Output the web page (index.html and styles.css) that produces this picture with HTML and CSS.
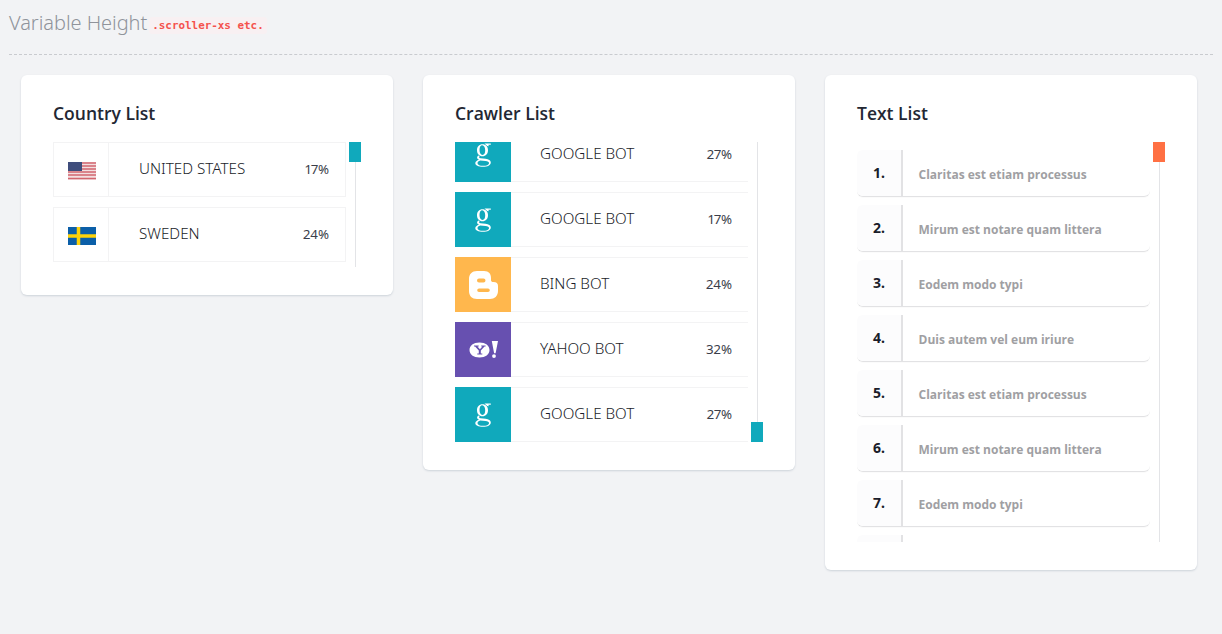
FILE: index.html
```html
<!DOCTYPE html>
<html lang="en">
<head>
  <meta charset="UTF-8" />
  <meta name="viewport" content="width=device-width, initial-scale=1.0" />
  <title>Variable Height Scrollers</title>
  <link rel="stylesheet" href="styles.css">
</head>
<body>
  <svg class="defs" width="0" height="0" aria-hidden="true">
    <symbol id="icon-google" viewBox="0 0 16 24">
      <path fill="currentColor" fill-rule="evenodd" d="M7.500 1.200c3.300 0 5.500 2.500 5.500 6s-2.200 6-5.500 6-5.500-2.500-5.500-6 2.200-6 5.500-6zm-.3 1.100c-1.700 0-2.700 1.900-2.700 4.700s1.200 5 3 5c1.700 0 2.700-1.900 2.700-4.700s-1.200-5-3-5z"/>
      <path fill="currentColor" d="M9.500.6h6.300v1.200h-2.400l.4 1.500-1.600-.4-1.400-1.100z"/>
      <path fill="currentColor" fill-rule="evenodd" d="M3.400 12.400l1.300.7c-1 1.300-.7 2 .8 2.200l5 .5c3.300.4 5.300 1.500 5.300 3.600 0 2.700-3.300 4.400-7.900 4.400C3.400 23.800.3 22.500.3 20.300c0-1.700 1.500-2.800 3.700-3.500-1.300-.5-1.900-1.200-1.900-2.200 0-.9.500-1.600 1.300-2.200zm1.800 5.200c-1.600.4-2.700 1.300-2.700 2.600 0 1.600 2.400 2.600 5.500 2.600 3.400 0 6-1 6-2.900 0-1.200-1.200-1.800-3.500-2z"/>
    </symbol>
    <symbol id="icon-blogger" viewBox="0 0 29 28">
      <path fill="currentColor" fill-rule="evenodd" d="M8 0h7c5 0 7 3 7 7v2c0 1.500.8 2 2.500 2 3 0 4.500 1.500 4.500 4v5c0 5-3.500 8-8 8H8c-5 0-8-3-8-8V8c0-5 3-8 8-8zm2 7.500a2 2 0 0 0 0 4h4.500a2 2 0 0 0 0-4zm0 10a1.800 1.800 0 0 0 0 3.600h9a1.800 1.800 0 0 0 0-3.600z"/>
    </symbol>
    <symbol id="icon-yahoo" viewBox="0 0 29 17">
      <path fill="currentColor" fill-rule="evenodd" d="M10.500 1.500c6 0 10 3 10 7.500s-4 7.500-10 7.500S.5 13.500.5 9s4-7.500 10-7.500zM5 4.500v1h1.100l3.700 4v3H8.300v1h5v-1h-1.500v-3l3.700-4h1.100v-1h-4.400v1h1.200l-2.500 2.700-2.400-2.700h1.200v-1z"/>
      <path fill="currentColor" d="M22.800 0H29l-2.400 12.200h-1.500zM25 13.200a1.900 1.900 0 1 1 0 3.800 1.900 1.900 0 0 1 0-3.800z"/>
    </symbol>
  </svg>

  <h2 class="page-title">Variable Height<code>.scroller-xs etc.</code></h2>
  <hr class="divider">

  <div class="cards">
    <section class="card">
      <h3 class="card-title">Country List</h3>
      <div class="scroller scroller-xs">
        <div class="rail"></div>
        <div class="thumb thumb-top"></div>
        <div class="scroll-body">
          <div class="country-row">
            <div class="flag-cell">
              <svg class="flag" viewBox="0 0 28 18">
                <rect width="28" height="18" fill="#f3dfe0"/>
                <path d="M0 1h28M0 4h28M0 7h28M0 10h28M0 13h28M0 16.500h28" stroke="#d2666f" stroke-width="1.500"/>
                <rect width="14" height="9" fill="#3f4d7c"/>
              </svg>
            </div>
            <div class="country-name">UNITED STATES</div>
            <div class="pct">17%</div>
          </div>
          <div class="country-row">
            <div class="flag-cell">
              <svg class="flag" viewBox="0 0 28 18">
                <rect width="28" height="18" fill="#0b5fa8"/>
                <path d="M0 9h28M10.500 0v18" stroke="#fdd20a" stroke-width="3.500"/>
              </svg>
            </div>
            <div class="country-name">SWEDEN</div>
            <div class="pct">24%</div>
          </div>
        </div>
      </div>
    </section>

    <section class="card">
      <h3 class="card-title">Crawler List</h3>
      <div class="scroller scroller-sm">
        <div class="rail"></div>
        <div class="thumb thumb-bottom"></div>
        <div class="scroll-body crawler-body">
          <div class="crawler-row">
            <div class="bot-icon bg-teal"><svg class="i-google"><use href="#icon-google"/></svg></div>
            <div class="bot-name">GOOGLE BOT</div>
            <div class="pct">27%</div>
          </div>
          <div class="crawler-row">
            <div class="bot-icon bg-teal"><svg class="i-google"><use href="#icon-google"/></svg></div>
            <div class="bot-name">GOOGLE BOT</div>
            <div class="pct">17%</div>
          </div>
          <div class="crawler-row">
            <div class="bot-icon bg-amber"><svg class="i-blogger"><use href="#icon-blogger"/></svg></div>
            <div class="bot-name">BING BOT</div>
            <div class="pct">24%</div>
          </div>
          <div class="crawler-row">
            <div class="bot-icon bg-purple"><svg class="i-yahoo"><use href="#icon-yahoo"/></svg></div>
            <div class="bot-name">YAHOO BOT</div>
            <div class="pct">32%</div>
          </div>
          <div class="crawler-row">
            <div class="bot-icon bg-teal"><svg class="i-google"><use href="#icon-google"/></svg></div>
            <div class="bot-name">GOOGLE BOT</div>
            <div class="pct">27%</div>
          </div>
        </div>
      </div>
    </section>

    <section class="card">
      <h3 class="card-title">Text List</h3>
      <div class="scroller scroller-md">
        <div class="rail"></div>
        <div class="thumb thumb-top thumb-orange"></div>
        <div class="scroll-body text-body">
          <div class="text-row"><div class="num">1.</div><div class="text">Claritas est etiam processus</div></div>
          <div class="text-row"><div class="num">2.</div><div class="text">Mirum est notare quam littera</div></div>
          <div class="text-row"><div class="num">3.</div><div class="text">Eodem modo typi</div></div>
          <div class="text-row"><div class="num">4.</div><div class="text">Duis autem vel eum iriure</div></div>
          <div class="text-row"><div class="num">5.</div><div class="text">Claritas est etiam processus</div></div>
          <div class="text-row"><div class="num">6.</div><div class="text">Mirum est notare quam littera</div></div>
          <div class="text-row"><div class="num">7.</div><div class="text">Eodem modo typi</div></div>
          <div class="text-row"><div class="num"></div><div class="text"></div></div>
        </div>
      </div>
    </section>
  </div>
</body>
</html>
```

FILE: styles.css
```css
* {
  box-sizing: border-box;
}
html, body {
  height: 100%;
}
body {
  margin: 0;
  padding: 0 9px;
  background: #f2f3f5;
  font-family: "Noto Sans", "Open Sans", sans-serif;
  color: #1a1d2a;
  overflow: hidden;
}
.defs {
  position: absolute;
}
.page-title {
  margin: 0;
  padding-top: 9px;
  height: 54px;
  font-size: 20px;
  line-height: 28px;
  font-weight: 300;
  letter-spacing: -0.05px;
  color: #8f939b;
}
.page-title code {
  margin-left: 2px;
  padding: 2px 3px;
  font-family: "DejaVu Sans Mono", monospace;
  font-size: 10.900px;
  font-weight: 700;
  letter-spacing: 0;
  color: #f4524d;
  background: #f8f0f2;
  border-radius: 3px;
  vertical-align: 1px;
}
.divider {
  margin: 0;
  width: 1204px;
  border: 0;
  border-top: 1px dashed #c9cbcf;
}
.cards {
  display: flex;
  align-items: flex-start;
  gap: 30px;
  padding: 20px 12px 0;
}
.card {
  width: 372px;
  padding: 26px 32px 28px;
  background: #fff;
  border-radius: 6px;
  box-shadow: 0 1px 2px rgba(100, 120, 140, 0.25);
}
.card-title {
  margin: 0 0 16px;
  font-family: "Open Sans", sans-serif;
  font-size: 17.500px;
  line-height: 25px;
  font-weight: 600;
  color: #232733;
}
.scroller {
  position: relative;
  overflow: hidden;
}
.scroller-xs { height: 125px; }
.scroller-sm { height: 300px; }
.scroller-md { height: 400px; }
.rail {
  position: absolute;
  top: 0;
  bottom: 0;
  right: 5px;
  width: 1px;
  background: #e3e4e7;
}
.thumb {
  position: absolute;
  right: 0;
  width: 12px;
  height: 20px;
  background: #10a9bc;
}
.thumb-top { top: 0; }
.thumb-bottom { bottom: 0; }
.thumb-orange { background: #ff7043; }
.scroll-body {
  width: 293px;
}
.pct {
  margin-left: auto;
  padding: 0 16px 2px 0;
  font-size: 13.300px;
  font-weight: 400;
  font-variant-numeric: proportional-nums;
  color: #3a3e4a;
}
.country-row {
  display: flex;
  align-items: center;
  height: 55px;
  margin-bottom: 10px;
  border: 1px solid #f3f3f4;
}
.flag-cell {
  display: flex;
  align-items: center;
  justify-content: center;
  width: 55px;
  height: 100%;
  padding-left: 2px;
  border-right: 1px solid #f3f3f4;
}
.flag {
  width: 28px;
  height: 18px;
  margin-top: 2px;
}
.country-name {
  padding: 0 0 4px 30px;
  font-size: 15.200px;
  font-weight: 300;
}
.crawler-body {
  margin-top: -15px;
}
.crawler-row {
  display: flex;
  align-items: center;
  height: 55px;
  margin-bottom: 10px;
  border-top: 1px solid #f3f3f4;
  border-bottom: 1px solid #f3f3f4;
}
.bot-icon {
  display: flex;
  align-items: center;
  justify-content: center;
  width: 56px;
  height: 55px;
  margin: -1px 0;
  color: #fff;
}
.bg-teal { background: #10a9bc; }
.bg-amber { background: #ffb74d; }
.bg-purple { background: #6750b0; }
.i-google { width: 16px; height: 24px; }
.i-blogger { width: 29px; height: 28px; }
.i-yahoo { width: 29px; height: 17px; }
.bot-name {
  padding: 0 0 4px 29px;
  font-size: 15.200px;
  font-weight: 300;
}
.text-body {
  padding-top: 8px;
}
.text-row {
  display: flex;
  height: 47px;
  margin-bottom: 8px;
  border-bottom: 1px solid #e2e2e4;
  border-radius: 0 0 6px 6px;
  box-shadow: 0 1px 1px rgba(0, 0, 0, 0.02);
}
.num {
  width: 46px;
  padding: 15px 0 0 16px;
  background: #fcfcfd;
  border-right: 2px solid #e2e2e4;
  border-radius: 6px 0 0 6px;
  font-size: 14px;
  line-height: 16px;
  font-weight: 700;
}
.text {
  padding: 16px 0 0 15.500px;
  font-family: "Open Sans", sans-serif;
  font-size: 12px;
  line-height: 17px;
  font-weight: 700;
  color: #a09fa3;
}
```
